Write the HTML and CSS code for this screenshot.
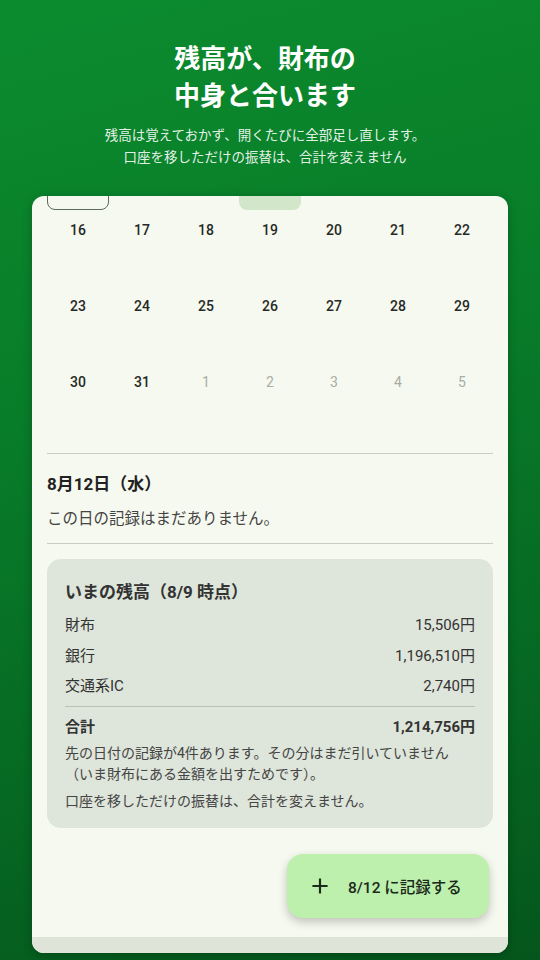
FILE: index.html
```html
<!DOCTYPE html>
<html lang="ja">
<head>
  <meta charset="UTF-8">
  <title>残高が、財布の中身と合います</title>
  <link rel="stylesheet" href="styles.css">
</head>
<body>
  <div class="screen">
    <header class="intro">
      <h1>残高が、財布の<br>中身と合います</h1>
      <p>残高は覚えておかず、開くたびに全部足し直します。<br>口座を移しただけの振替は、合計を変えません</p>
    </header>

    <div class="card">
      <div class="scroll">
        <!-- カレンダー（9日の行の下端から見えている状態） -->
        <div class="calendar">
          <div class="day today"></div>
          <div class="day"></div>
          <div class="day"></div>
          <div class="day selected"></div>
          <div class="day"></div>
          <div class="day"></div>
          <div class="day"></div>

          <div class="day"><span>16</span></div>
          <div class="day"><span>17</span></div>
          <div class="day"><span>18</span></div>
          <div class="day"><span>19</span></div>
          <div class="day"><span>20</span></div>
          <div class="day"><span>21</span></div>
          <div class="day"><span>22</span></div>

          <div class="day"><span>23</span></div>
          <div class="day"><span>24</span></div>
          <div class="day"><span>25</span></div>
          <div class="day"><span>26</span></div>
          <div class="day"><span>27</span></div>
          <div class="day"><span>28</span></div>
          <div class="day"><span>29</span></div>

          <div class="day"><span>30</span></div>
          <div class="day"><span>31</span></div>
          <div class="day other"><span>1</span></div>
          <div class="day other"><span>2</span></div>
          <div class="day other"><span>3</span></div>
          <div class="day other"><span>4</span></div>
          <div class="day other"><span>5</span></div>
        </div>

        <hr class="divider">

        <section class="day-detail">
          <h2>8月12日（水）</h2>
          <p>この日の記録はまだありません。</p>
        </section>

        <hr class="divider">

        <section class="balance">
          <h3>いまの残高（8/9 時点）</h3>
          <div class="row"><span>財布</span><span>15,506円</span></div>
          <div class="row"><span>銀行</span><span>1,196,510円</span></div>
          <div class="row"><span>交通系IC</span><span>2,740円</span></div>
          <div class="row total"><span>合計</span><span>1,214,756円</span></div>
          <p class="note">先の日付の記録が4件あります。その分はまだ引いていません（いま財布にある金額を出すためです）。</p>
          <p class="note">口座を移しただけの振替は、合計を変えません。</p>
        </section>
      </div>

      <div class="sheet-edge"></div>

      <button class="fab" type="button">
        <svg viewBox="0 0 24 24" width="26" height="26"><path d="M19 13h-6v6h-2v-6H5v-2h6V5h2v6h6v2z" fill="#1b2a1b"/></svg>
        <span>8/12 に記録する</span>
      </button>
    </div>
  </div>
</body>
</html>
```

FILE: styles.css
```css
body {
  margin: 0;
  font-family: Roboto, "Noto Sans CJK JP", sans-serif;
  background: #06641f;
}
.screen {
  width: 540px;
  height: 960px;
  overflow: hidden;
  background: linear-gradient(165deg, #0c8b2e 0%, #087c29 40%, #066a23 70%, #05561c 100%);
  display: flex;
  flex-direction: column;
  align-items: center;
}
.intro {
  text-align: center;
  color: white;
  padding-top: 38px;
  margin-right: 10px;
}
.intro h1 {
  margin: 0;
  font-size: 26px;
  line-height: 37px;
  font-weight: bold;
  font-family: "Noto Sans CJK JP", sans-serif;
}
.intro p {
  margin: 11px 0 0;
  font-size: 13.5px;
  line-height: 22px;
  color: rgba(255,255,255,0.9);
  font-family: "Noto Sans CJK JP", sans-serif;
}
.card {
  margin-top: 29px;
  width: 476px;
  height: 757px;
  background: #f6f9ef;
  border-radius: 12px;
  box-shadow: 0 2px 10px rgba(0,0,0,0.25);
  display: flex;
  flex-direction: column;
  overflow: hidden;
  position: relative;
}
.scroll {
  flex: 1;
  overflow: hidden;
  padding: 0 15px;
}
.calendar {
  margin-top: -60px; /* スクロール済みの位置 */
  display: grid;
  grid-template-columns: repeat(7, 1fr);
  grid-auto-rows: 74px;
  gap: 2px;
}
.day {
  border-radius: 8px;
  text-align: center;
  padding-top: 8px;
  box-sizing: border-box;
  font-size: 14px;
  line-height: 20px;
  font-weight: 500;
  color: #262926;
}
.day.today {
  border: 1.5px solid #5c6b58;
}
.day.selected {
  background: #d2e6ca;
}
.day.other {
  color: #a9ada6;
  font-weight: 400;
}
.divider {
  border: none;
  border-top: 1.5px solid #c9cec4;
  margin: 15px 0 0;
}
.day-detail h2 {
  margin: 18px 0 0;
  font-size: 17px;
  line-height: 24px;
  font-weight: bold;
  color: #222;
}
.day-detail p {
  margin: 12px 0 13px;
  font-size: 15.5px;
  line-height: 22px;
  color: #444;
}
.day-detail + .divider {
  margin-top: 0;
}
.balance {
  margin-top: 15px;
  background: #dee5da;
  border-radius: 14px;
  padding: 21px 18px 16px;
  color: #333;
}
.balance h3 {
  margin: 0 0 10px;
  font-size: 17px;
  line-height: 24px;
  font-weight: bold;
  color: #333;
}
.row {
  display: flex;
  justify-content: space-between;
  font-size: 15px;
  line-height: 22px;
  margin-bottom: 8.5px;
}
.row.total {
  border-top: 1px solid #b9c1b5;
  margin-top: 6px;
  padding-top: 9px;
  margin-bottom: 5px;
  font-weight: bold;
}
.note {
  margin: 0 0 6px;
  font-size: 14px;
  line-height: 21px;
  color: #444;
}
.note:last-child {
  margin-bottom: 0;
}
.sheet-edge {
  height: 16px;
  background: #dfe4d9;
}
.fab {
  position: absolute;
  right: 19px;
  bottom: 35px;
  width: 202px;
  height: 64px;
  border: none;
  border-radius: 16px;
  background: #bdf0ad;
  box-shadow: 0 4px 10px rgba(0,0,0,0.22);
  display: flex;
  align-items: center;
  gap: 15px;
  padding: 0 0 0 20px;
  font-family: Roboto, "Noto Sans CJK JP", sans-serif;
  font-size: 15.5px;
  font-weight: 500;
  color: #1b2a1b;
}
.fab svg {
  flex: none;
}
```
